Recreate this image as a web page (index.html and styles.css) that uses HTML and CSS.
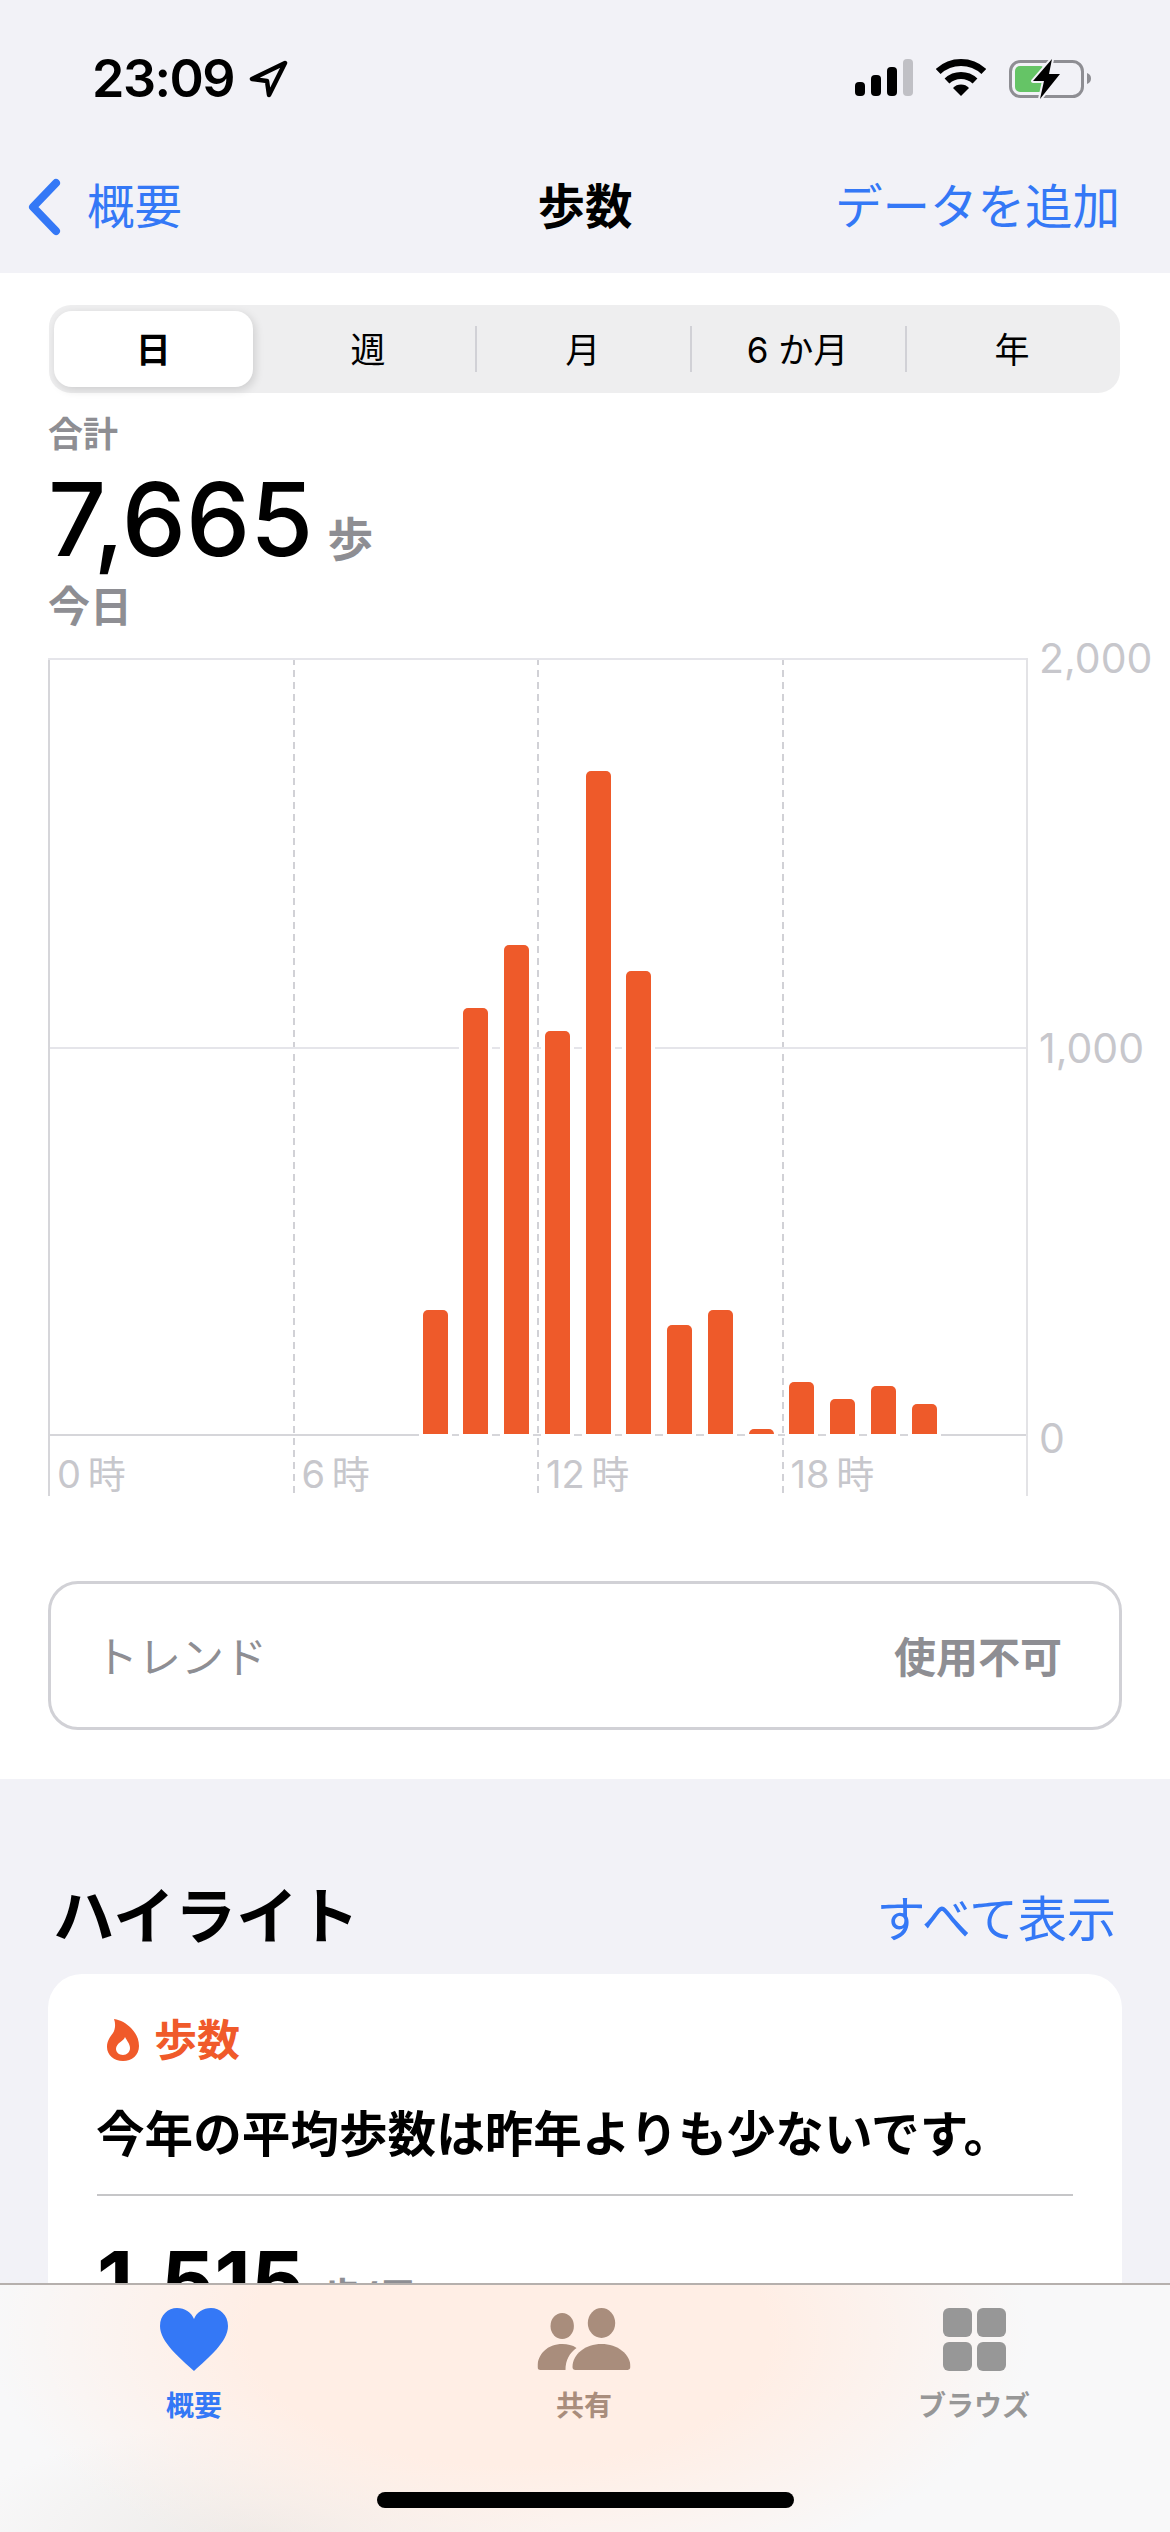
FILE: index.html
```html
<!DOCTYPE html>
<html lang="ja">
<head>
    <meta charset="UTF-8">
    <title>歩数</title>
    <link rel="stylesheet" href="styles.css">
</head>
<body>
    <div id="screen">
        <!-- Status bar and navigation -->
        <header class="top">
            <div class="status">
                <div class="status-left">
                    <span class="time">23:09</span>
                    <svg class="loc" width="39" height="38" viewBox="0 0 39 38"><path d="M36 3 L3 19 L18 21 L20 35 Z" fill="none" stroke="#000" stroke-width="4.5" stroke-linejoin="round"/></svg>
                </div>
                <div class="status-right">
                    <svg width="58" height="37" viewBox="0 0 58 37"><rect x="0" y="23" width="10" height="14" rx="4"/><rect x="16" y="16" width="10" height="21" rx="4"/><rect x="32" y="8" width="10" height="29" rx="4"/><rect x="48" y="0" width="10" height="37" rx="4" fill="#c0c0c5"/></svg>
                    <svg width="50" height="37" viewBox="0 0 50 37" fill="none" stroke="#000" stroke-width="7"><path d="M2.2 12.5 A33.5 33.5 0 0 1 47.8 12.5"/><path d="M11 22 A20.5 20.5 0 0 1 39 22"/><path d="M25 37 L17 29 A11 11 0 0 1 33 29 Z" fill="#000" stroke="none"/></svg>
                    <svg width="82" height="42" viewBox="0 0 82 42"><rect x="1.5" y="2.5" width="72" height="35" rx="10" fill="none" stroke="#8e8e93" stroke-width="3"/><rect x="6" y="7" width="30" height="26" rx="5" fill="#65c466"/><path d="M78 14 C81 15 82 17 82 19.5 C82 22 81 24 78 25 Z" fill="#8e8e93"/><path d="M43 0 L24 22 L35 22 L31 40 L51 15 L40 15 Z" fill="#000" stroke="#f2f2f7" stroke-width="4" paint-order="stroke" stroke-linejoin="round"/></svg>
                </div>
            </div>
            <nav class="nav">
                <a class="nav-back">
                    <svg width="33" height="58" viewBox="0 0 33 58"><path d="M28 5 L5 29 L28 53" fill="none" stroke="#3478f6" stroke-width="8" stroke-linecap="round" stroke-linejoin="round"/></svg>
                    <span>概要</span>
                </a>
                <h1 class="nav-title">歩数</h1>
                <a class="nav-add">データを追加</a>
            </nav>
        </header>

        <main>
            <section class="panel">
                <div class="seg">
                    <div class="seg-item selected"><span>日</span></div>
                    <div class="seg-item"><span>週</span></div>
                    <div class="seg-item line"><span>月</span></div>
                    <div class="seg-item line"><span>6 か月</span></div>
                    <div class="seg-item line"><span>年</span></div>
                </div>

                <div class="summary-label">合計</div>
                <div class="summary-value">7,665<span class="unit">歩</span></div>
                <div class="summary-date">今日</div>

                <div class="chart">
                    <div class="plot">
                        <div class="vlines"><i></i><i></i><i></i></div>
                        <div class="hline mid"></div>
                        <div class="bars">
                            <b class="bar" style="grid-column:10;height:124px"></b>
                            <b class="bar" style="grid-column:11;height:426px"></b>
                            <b class="bar" style="grid-column:12;height:489px"></b>
                            <b class="bar" style="grid-column:13;height:403px"></b>
                            <b class="bar" style="grid-column:14;height:663px"></b>
                            <b class="bar" style="grid-column:15;height:463px"></b>
                            <b class="bar" style="grid-column:16;height:109px"></b>
                            <b class="bar" style="grid-column:17;height:124px"></b>
                            <b class="bar" style="grid-column:18;height:5px"></b>
                            <b class="bar" style="grid-column:19;height:52px"></b>
                            <b class="bar" style="grid-column:20;height:35px"></b>
                            <b class="bar" style="grid-column:21;height:48px"></b>
                            <b class="bar" style="grid-column:22;height:30px"></b>
                        </div>
                        <div class="xlabels">
                            <span>0 時</span><span>6 時</span><span>12 時</span><span>18 時</span>
                        </div>
                    </div>
                    <div class="ylabels">
                        <span>2,000</span><span>1,000</span><span>0</span>
                    </div>
                </div>

                <div class="trend">
                    <span class="trend-name">トレンド</span>
                    <span class="trend-state">使用不可</span>
                </div>
            </section>

            <section class="highlights">
                <div class="hl-head">
                    <h2>ハイライト</h2>
                    <a>すべて表示</a>
                </div>
                <div class="card">
                    <div class="card-tag">
                        <svg width="32" height="42" viewBox="0 0 32 42"><path fill-rule="evenodd" d="M7 0 C14 1 19 4 24 9 C29 14 32 20 32 27 C32 36 25 42 16 42 C7 42 0 36 0 28 C0 22 3 18 6 14 C8 11 9 5 7 0 Z M16 36 C20 36 23 33 23 29 C23 25 20 22 18 18 C17 22 9 24 9 30 C9 33 12 36 16 36 Z" fill="#f05a2a"/></svg>
                        <span>歩数</span>
                    </div>
                    <p class="card-text">今年の平均歩数は昨年よりも少ないです。</p>
                    <hr class="card-line">
                    <div class="card-value">1,515<span class="unit">歩/日</span></div>
                </div>
            </section>
        </main>

        <!-- Tab bar sits over the scrolled content -->
        <footer class="tabbar">
            <div class="tabs">
                <div class="tab active">
                    <svg width="68" height="63" viewBox="0 0 68 63"><path d="M34 63 C20 50 0 34 0 18 C0 7 8 0 17 0 C25 0 31 4 34 11 C37 4 43 0 51 0 C60 0 68 7 68 18 C68 34 48 50 34 63 Z" fill="#3478f6"/></svg>
                    <span>概要</span>
                </div>
                <div class="tab shared">
                    <svg width="93" height="63" viewBox="0 0 93 63" fill="#a98d7c"><ellipse cx="24.7" cy="18" rx="11.7" ry="13"/><ellipse cx="64" cy="15" rx="13.7" ry="15"/><path d="M0 59 C0 46 10 36 25 36 C30 36 35 37 39 40 C32 45 28 52 28 62 L3 62 C1 62 0 61 0 59 Z"/><path d="M35 59 C35 46 48 36 64 36 C80 36 93 46 93 59 C93 61 91 62 90 62 L38 62 C36 62 35 61 35 59 Z"/></svg>
                    <span>共有</span>
                </div>
                <div class="tab">
                    <div class="grid-icon"><i></i><i></i><i></i><i></i></div>
                    <span>ブラウズ</span>
                </div>
            </div>
            <div class="home"></div>
        </footer>
    </div>
</body>
</html>
```

FILE: styles.css
```css
* {
    box-sizing: border-box;
}

body {
    margin: 0;
    background-color: #f2f2f7;
    color: #000;
    font-family: Inter, "Noto Sans CJK JP", sans-serif;
}

h1, h2, p, hr {
    margin: 0;
}

#screen {
    width: 1170px;
    height: 2532px;
    position: relative;
    overflow: hidden;
}

/* Header */
.top {
    height: 273px;
    background-color: #f2f2f7;
}

.status {
    height: 178px;
    padding: 59px 79px 0 92px;
    display: flex;
    justify-content: space-between;
    align-items: flex-start;
}

.status-left {
    display: flex;
    align-items: center;
    gap: 15px;
    height: 39px;
}

.time {
    font-size: 52px;
    font-weight: 600;
    line-height: 39px;
    letter-spacing: -1.5px;
}

.status-right {
    display: flex;
    align-items: flex-start;
    gap: 23px;
}

.nav {
    display: grid;
    grid-template-columns: 1fr auto 1fr;
    align-items: center;
    height: 58px;
    padding: 0 50px;
    font-size: 47.5px;
    line-height: 58px;
}

.nav-back {
    display: flex;
    align-items: center;
    gap: 26px;
    margin-left: -22px;
    color: #3478f6;
}

.nav-title {
    font-size: 47.5px;
    font-weight: 700;
}

.nav-add {
    color: #3478f6;
    text-align: right;
}

/* Steps panel */
.panel {
    background-color: #fff;
    height: 1506px;
    padding: 32px 48px 0;
}

.seg {
    width: 1071px;
    height: 88px;
    margin-left: 1px;
    background-color: #eeeeef;
    border-radius: 22px;
    display: flex;
}

.seg-item {
    flex: 0 0 214.7px;
    position: relative;
    display: flex;
    align-items: center;
    justify-content: center;
    padding-bottom: 3px;
    font-size: 35px;
}

.seg-item:first-child {
    margin-left: -3px;
}

.seg-item.selected::before {
    content: "";
    position: absolute;
    top: 6px;
    bottom: 6px;
    left: 8px;
    right: 8px;
    background-color: #fff;
    border-radius: 18px;
    box-shadow: 2px 3px 10px rgba(0, 0, 0, 0.14);
}

.seg-item.selected span {
    position: relative;
    font-weight: 700;
}

.seg-item.line::before {
    content: "";
    position: absolute;
    left: 0;
    top: 21px;
    height: 46px;
    width: 2px;
    background-color: #d1d1d6;
}

.summary-label {
    margin-top: 17px;
    font-size: 35px;
    line-height: 48px;
    font-weight: 700;
    color: #8e8e93;
}

.summary-value {
    margin-top: 5px;
    font-size: 102px;
    line-height: 112px;
    font-weight: 500;
}

.unit {
    font-weight: 700;
    line-height: 1;
    color: #8e8e93;
}

.summary-value .unit {
    margin-left: 14px;
    font-size: 46px;
}

.summary-date {
    margin-top: 7px;
    font-size: 42px;
    line-height: 50px;
    font-weight: 700;
    color: #8e8e93;
}

/* Chart */
.chart {
    margin-top: 26px;
    display: flex;
}

.plot {
    flex: none;
    width: 980px;
    height: 838px;
    position: relative;
    border-left: 2px solid #d6d6da;
    border-right: 2px solid #e3e3e6;
}

.vlines {
    position: absolute;
    inset: 0 0 0 -2px;
    display: grid;
    grid-template-columns: repeat(4, 1fr);
}

.vlines i {
    grid-row: 1;
    width: 2px;
    background-image: repeating-linear-gradient(to bottom, #d1d1d6 0 7px, transparent 7px 12px);
}

.vlines i:nth-child(1) { grid-column: 2; }
.vlines i:nth-child(2) { grid-column: 3; }
.vlines i:nth-child(3) { grid-column: 4; }

.hline.mid {
    position: absolute;
    left: 0;
    right: 0;
    top: 389px;
    height: 2px;
    background-color: #e5e5ea;
}

.bars {
    position: relative;
    height: 778px;
    margin-left: -2px;
    display: grid;
    grid-template-columns: repeat(24, 1fr);
    align-items: end;
    justify-items: center;
    border-top: 2px solid #e5e5ea;
    border-bottom: 2px solid #d6d6da;
}

.bar {
    grid-row: 1;
    width: 25px;
    background-color: #ee5a2a;
    border-radius: 5px 5px 0 0;
    box-shadow: 0 0 0 4px #fff;
}

.xlabels {
    display: grid;
    grid-template-columns: repeat(4, 1fr);
    margin-left: -2px;
    padding-top: 16px;
    font-size: 38px;
    line-height: 44px;
    word-spacing: -4px;
    color: #c7c7cc;
}

.xlabels span {
    padding-left: 9px;
    position: relative;
}

.ylabels {
    flex: none;
    height: 820px;
    margin-top: -20px;
    padding-left: 11px;
    display: flex;
    flex-direction: column;
    justify-content: space-between;
    font-size: 41px;
    line-height: 40px;
    color: #c7c7cc;
}

/* Trend */
.trend {
    margin-top: 85px;
    width: 1074px;
    height: 149px;
    border: 3px solid #d1d1d6;
    border-radius: 30px;
    padding: 0 57px 3px 44px;
    display: flex;
    justify-content: space-between;
    align-items: center;
    font-size: 43px;
    color: #8e8e93;
}

.trend-state {
    font-size: 42px;
    font-weight: 700;
}

/* Highlights */
.highlights {
    padding: 100px 48px 0;
}

.hl-head {
    display: flex;
    justify-content: space-between;
    align-items: flex-end;
    height: 95px;
    padding: 0 6px 0 5px;
}

.hl-head h2 {
    margin-bottom: 15px;
    font-size: 61.5px;
    line-height: 84px;
    font-weight: 700;
}

.hl-head a {
    margin-bottom: 18px;
    font-size: 49px;
    line-height: 72px;
    color: #3478f6;
}

.card {
    background-color: #fff;
    border-radius: 34px;
    width: 1074px;
    height: 500px;
    padding: 44px 49px 0;
}

.card-tag {
    display: flex;
    align-items: center;
    gap: 15px;
    margin-left: 10px;
    font-size: 43px;
    line-height: 44px;
    font-weight: 700;
    color: #f05a2a;
}

.card-text {
    margin-top: 43px;
    margin-left: -1px;
    font-size: 48.6px;
    line-height: 60px;
    font-weight: 700;
    white-space: nowrap;
}

.card-line {
    margin-top: 29px;
    border: 0;
    height: 2px;
    background-color: #c6c6c8;
}

.card-value {
    margin-top: 38px;
    font-size: 84px;
    line-height: 96px;
    font-weight: 700;
}

.card-value .unit {
    margin-left: 18px;
    font-size: 40px;
}

/* Tab bar */
.tabbar {
    position: absolute;
    left: 0;
    right: 0;
    bottom: 0;
    height: 249px;
    border-top: 2px solid #b6b0ad;
    background:
        radial-gradient(ellipse 520px 260px at 510px 50px, #ffeee5 50%, rgba(255, 238, 229, 0) 100%),
        radial-gradient(ellipse 300px 110px at 260px 249px, rgba(232, 228, 224, 0.7), rgba(232, 228, 224, 0) 100%),
        #f8f8f9;
}

.tabs {
    display: flex;
    padding: 23px 0 0;
}

.tab {
    display: flex;
    flex-direction: column;
    align-items: center;
    gap: 19px;
    font-size: 28px;
    line-height: 32px;
    font-weight: 700;
    color: #979797;
    position: absolute;
    top: 23px;
    transform: translateX(-50%);
}

.tab:nth-child(1) { left: 194px; }
.tab:nth-child(2) { left: 584px; }
.tab:nth-child(3) { left: 974px; }

.tab.active {
    color: #3478f6;
}

.tab.shared {
    color: #a98d7c;
}

.grid-icon {
    width: 63px;
    height: 63px;
    display: grid;
    grid-template-columns: 1fr 1fr;
    gap: 5px;
}

.grid-icon i {
    background-color: #979797;
    border-radius: 6px;
}

.home {
    position: absolute;
    left: 377px;
    top: 207px;
    width: 417px;
    height: 16px;
    border-radius: 8px;
    background-color: #000;
}
```
